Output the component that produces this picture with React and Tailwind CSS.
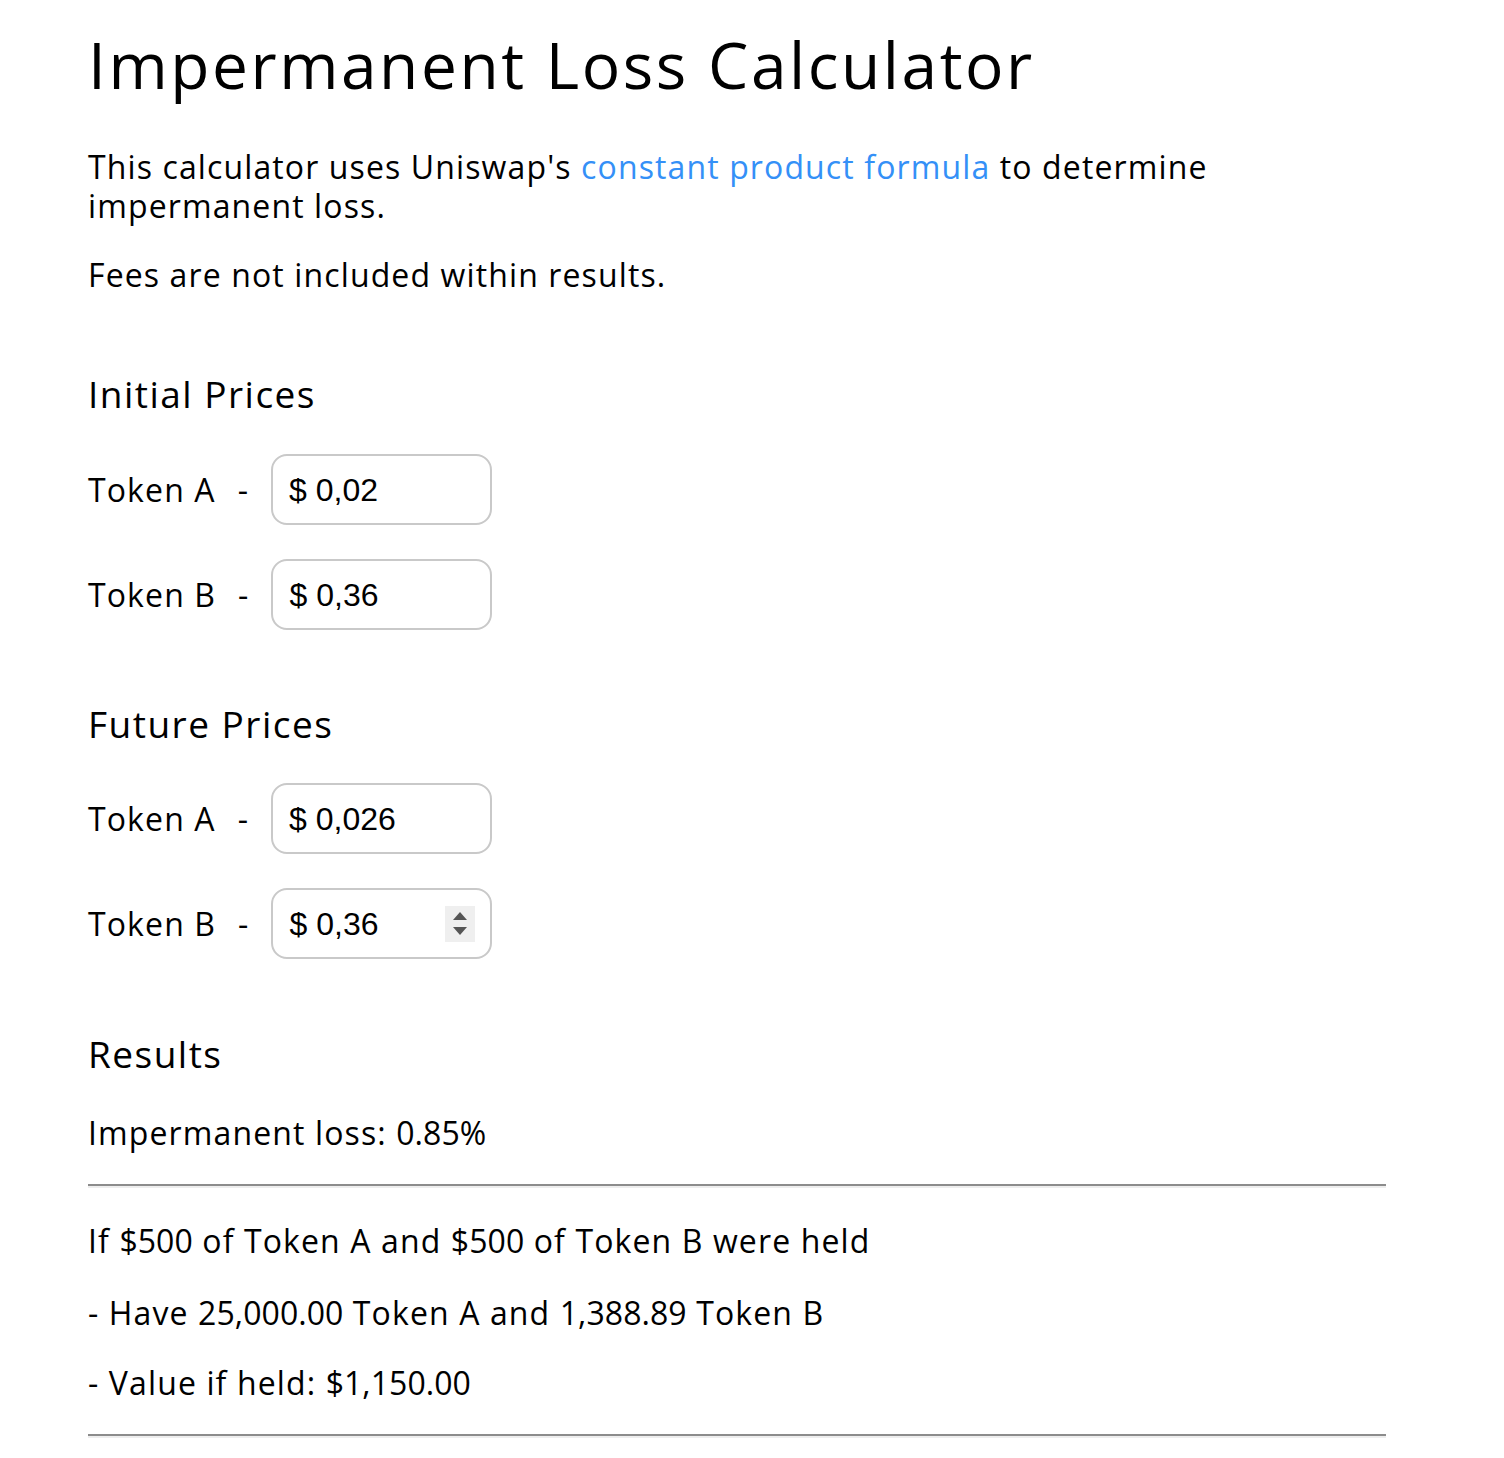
import React from "react";

const font = { fontFamily: '"Open Sans", "Noto Sans", sans-serif' };

function PriceInput({ value, spinner }) {
  return (
    <div className="ml-[23px] flex h-[71px] w-[221px] items-center rounded-[16px] border-2 border-[#c9c9c9] pl-[16px] pr-[15px] bg-white tracking-normal">
      <span className="text-[32px] text-black font-['Liberation_Sans',Arial,sans-serif]">$</span>
      <input
        readOnly
        value={value}
        className="ml-[9px] w-full min-w-0 bg-transparent text-[32px] text-black outline-none font-['Liberation_Sans',Arial,sans-serif]"
      />
      {spinner && (
        <div className="flex h-[36px] w-[30px] shrink-0 flex-col items-center justify-center gap-[7px] bg-[#efefef]">
          <svg width="14" height="8" viewBox="0 0 14 8"><path d="M7 0 L14 8 L0 8 Z" fill="#555" /></svg>
          <svg width="14" height="8" viewBox="0 0 14 8"><path d="M0 0 L14 0 L7 8 Z" fill="#555" /></svg>
        </div>
      )}
    </div>
  );
}

function Row({ label, value, spinner, className }) {
  return (
    <div className={`flex items-center ${className || ""}`}>
      <span className="text-[32px] leading-[39px] text-black tracking-[0.035em]">{label}</span>
      <span className="ml-[22px] text-[32px] leading-[39px] text-black">-</span>
      <PriceInput value={value} spinner={spinner} />
    </div>
  );
}

const N = ({ children }) => <span className="tracking-[0.002em]">{children}</span>;

export default function App() {
  return (
    <div className="min-h-[1458px] bg-white text-black" style={font}>
      <div className="ml-[88px] w-[1298px] pt-[26px] pb-[20px]">
        <h1 className="text-[64px] leading-[78px] font-normal tracking-[0.04em]">Impermanent Loss Calculator</h1>
        <p className="mt-[43px] max-w-[1150px] text-[32px] leading-[39px] tracking-[0.035em]">
          This calculator uses Uniswap's <a className="text-[#3490f7]">constant product formula</a> to determine impermanent loss.
        </p>
        <p className="mt-[30px] text-[32px] leading-[39px] tracking-[0.035em]">Fees are not included within results.</p>

        <h3 className="mt-[77px] text-[37px] leading-[45px] font-normal tracking-[0.04em]">Initial Prices</h3>
        <Row className="mt-[38px]" label="Token A" value="0,02" />
        <Row className="mt-[34px]" label="Token B" value="0,36" />

        <h3 className="mt-[71px] text-[37px] leading-[45px] font-normal tracking-[0.04em]">Future Prices</h3>
        <Row className="mt-[37px]" label="Token A" value="0,026" />
        <Row className="mt-[34px]" label="Token B" value="0,36" spinner />

        <h3 className="mt-[72px] text-[37px] leading-[45px] font-normal tracking-[0.04em]">Results</h3>
        <p className="mt-[37px] text-[32px] leading-[39px] tracking-[0.035em]">Impermanent loss: <N>0.85%</N></p>
        <div className="mt-[32px] h-[4px] w-full border-t-2 border-b-2 border-t-[#8c8c8c] border-b-[#eeeeee]" />
        <p className="mt-[33px] text-[32px] leading-[39px] tracking-[0.035em]">If <N>$500</N> of Token A and <N>$500</N> of Token B were held</p>
        <p className="mt-[33px] text-[32px] leading-[39px] tracking-[0.035em]">- Have <N>25,000.00</N> Token A and <N>1,388.89</N> Token B</p>
        <p className="mt-[31px] text-[32px] leading-[39px] tracking-[0.035em]">- Value if held: <N>$1,150.00</N></p>
        <div className="mt-[32px] h-[4px] w-full border-t-2 border-b-2 border-t-[#8c8c8c] border-b-[#eeeeee]" />
      </div>
    </div>
  );
}
